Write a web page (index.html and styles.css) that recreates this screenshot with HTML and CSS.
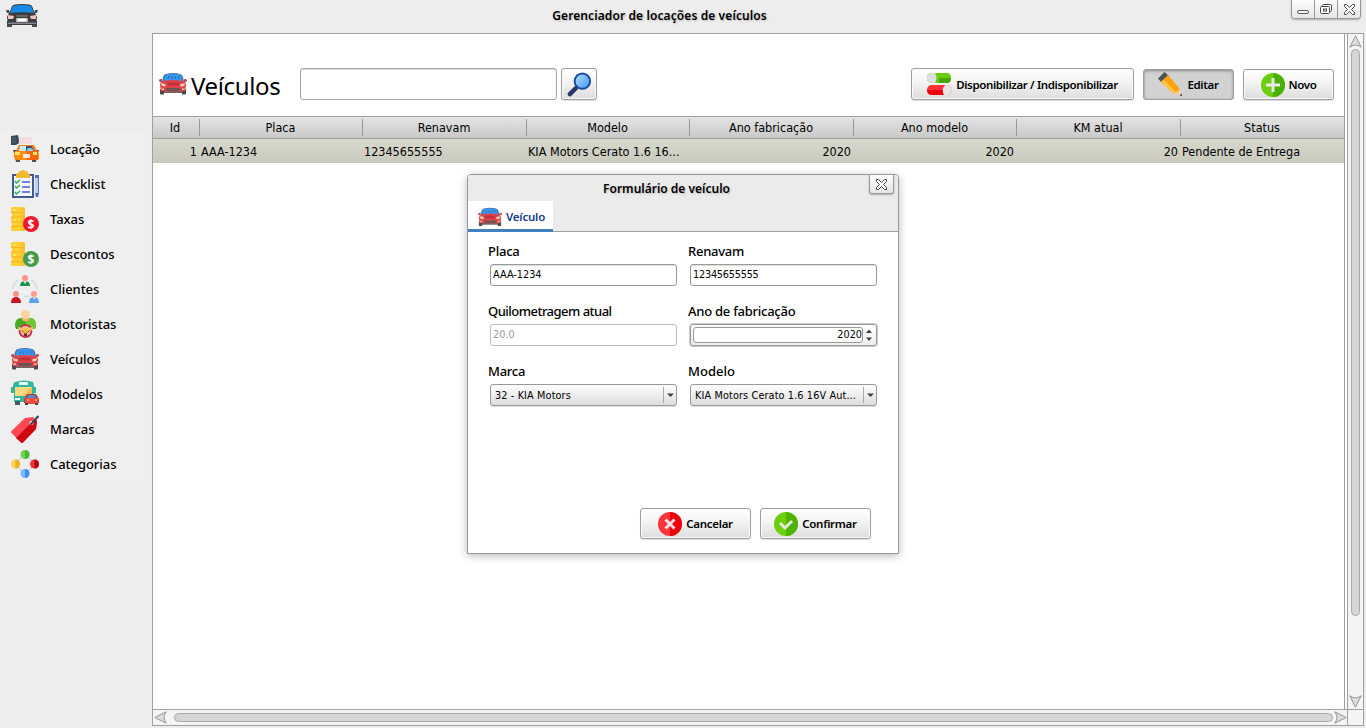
FILE: index.html
```html
<!DOCTYPE html>
<html lang="pt-BR">
<head>
<meta charset="utf-8">
<title>Gerenciador de locações de veículos</title>
<link rel="stylesheet" href="styles.css">
</head>
<body>
<svg class="defs" width="0" height="0">
  <defs>
    <linearGradient id="lens" x1="0" y1="0" x2="1" y2="1"><stop offset="0" stop-color="#b8e0ff"/><stop offset="1" stop-color="#3f95f5"/></linearGradient>
    <symbol id="car" viewBox="0 0 28 22">
      <path d="M4 16h20v4H4z" fill="#70655f"/>
      <path d="M1 16h4v5.500H2q-1 0-1-1zM23 16h4v4.500q0 1-1 1h-3z" fill="#4c4b50"/>
      <path d="M0 7q0-1 3-1v3H1q-1-1-1-2zM28 7q0-1-3-1v3h2q1-1 1-2z" fill="#c5434a"/>
      <path d="M7 1q7-1.800 14 0 2 0 3 3l1 5H3l1-5q1-3 3-3z" fill="#4a6f9e"/>
      <path d="M8 1.500q6-1.300 12 0 2 0 2.500 2.500l1 4h-19l1-4Q6 1.500 8 1.500z" fill="#3a96ec"/>
      <path d="M9 6l.7-3M12.500 6l.5-3M16 6l.7-3M19.500 6l.5-3" stroke="#256fc0" fill="none"/>
      <path d="M4 8q10-2 20 0 3 1 3 4l-1 6q-12 1-24 0l-1-6q0-3 3-4z" fill="#df4249"/>
      <path d="M8 10q6-1.500 12 0l-1 2.500H9z" fill="#b8323c"/>
      <path d="M2 10.500q4-.5 5 1.500l-1 1.500q-4 0-4-3zM26 10.500q-4-.5-5 1.500l1 1.500q4 0 4-3z" fill="#ffd9bd"/>
      <path d="M6 15h16l-2 3H8z" fill="#6e5554"/><path d="M2 16l3-1v2H2zM26 16l-3-1v2h3z" fill="#ffb38a"/>
    </symbol>
    <symbol id="dark-car" viewBox="0 0 32 24">
      <path d="M6 2q1-2 10-2t10 2l3 8H3z" fill="#34383e"/>
      <path d="M7 2q9-2 18 0l3 7H4z" fill="#168be5"/>
      <path d="M0 6h3l1 3H1zM32 6h-3l-1 3h3zM1 17h5v6H1zM26 17h5v6h-5z" fill="#4b4b50"/>
      <path d="M3 9q13-1.500 26 0l2 4-1 8H2l-1-8z" fill="#3c3b40"/>
      <path d="M2 11l6 1-1 3H2zM30 11l-6 1 1 3h5z" fill="#f1c4bb"/>
      <path d="M10 11h12l-1 2H11z" fill="#666"/><path d="M10 14h12v4H10z" fill="#aaa"/><path d="M11.500 14.500h9v3h-9z" fill="#fff"/>
      <path d="M2 18.500h28V20H2z" fill="#85858a"/>
    </symbol>
    <symbol id="rent" viewBox="0 0 28 28">
      <path d="M6 2h15v7H6z" fill="#f4dce2"/><path d="M0 1l7-1q1 4 1 8l-3 2H0z" fill="#394956"/><path d="M1 2h4v6H1z" fill="#465866"/>
      <path d="M2 15h4v3H3zM23 15h5l-1 3h-4zM4 22h5v5H5zM21 22h5l-1 5h-4z" fill="#43525e"/>
      <path d="M8 10h15l3 6H5z" fill="#f77d16"/><path d="M9 11h12l2 5H8z" fill="#c4eaff"/><path d="M15 11h6l2 5h-8z" fill="#3e5268"/>
      <path d="M16 16q-1-3 3-3 3 0 3 3" fill="#82d0ef"/>
      <path d="M4 16h22l2 3v5l-3 1H6l-3-2v-5z" fill="#ff8c0c"/><path d="M16 16h11v9H16z" fill="#f4660c"/>
      <path d="M4 17h5v3H4zM22 17h4v3h-4z" fill="#ffe06b"/><path d="M12 19h7v4h-7z" fill="#ffe6de"/>
    </symbol>
    <symbol id="check" viewBox="0 0 28 28">
      <path d="M1 4h22v24H1z" fill="#45598e"/><path d="M3 6h18v20H3z" fill="#f3f7ff"/>
      <path d="M7 3q0-2 3-2 2-2 4 0 3 0 3 2l2 2v3H5V5z" fill="#f5b92f"/>
      <path d="M4 11l1.500 2L9 10M4 16l1.500 2L9 15M4 22l1.500 2L9 21" fill="none" stroke="#24b451" stroke-width="1.500"/>
      <path d="M11 12h8M11 17h8M11 22h8" stroke="#5356db" stroke-width="1.500"/>
      <path d="M24 5h4v3h-4zM24 23h4l-1 4h-2z" fill="#456ebd"/><path d="M24 8h3v15h-3z" fill="#bbd0f3"/><path d="M27 6h1v17h-1z" fill="#5776b7"/>
    </symbol>
    <symbol id="coins" viewBox="0 0 28 28">
      <path d="M1 2h12q1 0 1 1v23H1q-1 0-1-1v-4h1v-5H0v-4h1V8H0V3q0-1 1-1z" fill="#ffd034"/>
      <path d="M0 7.500h14M0 12h14M0 17h14M0 21.500h14" stroke="#f8b321"/><path d="M2 4h3v2H2zM2 14h3v2H2z" fill="#ffe75d"/><path d="M10 3h4v23h-4z" fill="#f9b92d" opacity=".6"/>
    </symbol>
    <symbol id="clients" viewBox="0 0 28 28">
      <path d="M7 5Q2 9 2 14M20 5q5 3 6 9M13 21q3 1 5 0" fill="none" stroke="#cfdde6" stroke-width="1.500"/>
      <circle cx="14" cy="3" r="3" fill="#ff9185"/><path d="M9 11q0-5 5-5t5 5z" fill="#14964c"/><path d="M12 6h4l-2 3z" fill="#ffd0c4"/>
      <circle cx="5" cy="19" r="3" fill="#ff9185"/><path d="M0 28q0-6 5-6t5 6z" fill="#c81120"/>
      <circle cx="23" cy="19" r="3" fill="#ff9c8d"/><path d="M18 28q0-6 5-6t5 6z" fill="#5b9eee"/><path d="M22 22h3l-2 3z" fill="#ffd0c4"/>
    </symbol>
    <symbol id="driver" viewBox="0 0 28 28">
      <path d="M5 19l-1-3q0-8 6-8h9q6 0 6 8l-1 3z" fill="#42ad22"/><path d="M15 8h4q6 0 6 8l-1 3h-9z" fill="#72c832"/>
      <path d="M11 7h7v3q-3 3-7 0z" fill="#f5b173"/><circle cx="14.500" cy="4.500" r="4.500" fill="#ffd29c"/>
      <circle cx="14.500" cy="21" r="6" fill="#f9c0a3" stroke="#c83050" stroke-width="1.800"/><path d="M9.500 20h10l-3.500 3v3h-3v-3z" fill="#633322"/><path d="M7 17l5 1v3l-4-1zM22 17l-5 1v3l4-1z" fill="#ffc16c"/><path d="M14.500 17l3 4-3 3-3-3z" fill="#f6ba36"/>
    </symbol>
    <symbol id="bus" viewBox="0 0 28 28">
      <path d="M4 2Q13-1 22 2q1 2 1 5h2v6h-2v9H3v-9H0V7h2q0-4 2-5z" fill="#2fb7a2"/><path d="M4 21h5v4H4z" fill="#435e67"/>
      <path d="M8 2h9v3H8z" fill="#e4fcf8"/><path d="M4 7h17v9H4z" fill="#ffd77e"/><path d="M12 16l9-9v9z" fill="#ffbb4e"/><path d="M4 18h5v2H4z" fill="#fff"/>
      <path d="M16 14h9l3 5v4H13v-4z" fill="#b63a40"/><path d="M17 15h7l1 4h-9z" fill="#4c91c5"/><path d="M14 18h13v6H14z" fill="#ed4d42"/><path d="M14 23h3v2h-3zM24 23h3v2h-3z" fill="#444"/><path d="M16 20h2M24 20h2" stroke="#ffe5a8"/>
    </symbol>
    <symbol id="tag" viewBox="0 0 28 28">
      <path d="M14 3l8-1 4 4-1 8L12 27.500q-1 1-2 0L.500 18q-1-1 0-2z" fill="#ff4854"/><path d="M24 4l2 2-1 8L12 27.500q-1 1-2 0L5 23z" fill="#cf0712"/><circle cx="20.500" cy="8" r="2" fill="#fff"/><path d="M19.500 9.500L27.500 1" stroke="#30475d" fill="none" stroke-width="2"/>
    </symbol>
    <symbol id="category" viewBox="0 0 28 28">
      <path d="M14 4l10 10-10 10L4 14z" fill="none" stroke="#cfdbe6" stroke-width="1.500"/>
      <circle cx="14" cy="4.500" r="4.500" fill="#70d34f"/><path d="M14 0a4.500 4.500 0 010 9z" fill="#45b934"/>
      <circle cx="4.500" cy="14" r="4.500" fill="#ffd052"/><path d="M4.500 9.500a4.500 4.500 0 010 9z" fill="#efb020"/>
      <circle cx="23.500" cy="14" r="4.500" fill="#ed353b"/><path d="M23.500 9.500a4.500 4.500 0 010 9z" fill="#b40012"/>
      <circle cx="14" cy="23.500" r="4.500" fill="#72bbfc"/><path d="M14 19a4.500 4.500 0 010 9z" fill="#478cf4"/>
    </symbol>
    <symbol id="pill" viewBox="0 0 25 22">
      <path d="M5 0h15q4 0 4 5t-4 5H5q-5 0-5-5t5-5z" fill="#6acb0b"/><path d="M12 5h12q0 5-4 5h-8z" fill="#45a800"/><path d="M4 0h4q3 5 0 10H5Q0 10 0 5q0-4 4-5z" fill="#dcdfe2"/>
      <path d="M4 12h16q5 0 5 5t-5 5H4q-4-1-4-5t4-5z" fill="#ff3038"/><path d="M0 17h18v5H4q-4-1-4-5z" fill="#f0000a"/><path d="M18 12h2q5 0 5 5t-5 5h-3q-3-5 1-10z" fill="#e2e4e8"/>
    </symbol>
    <symbol id="pencil" viewBox="0 0 25 25">
      <path d="M0 6.500L6.500 0 11 4l-7 7z" fill="#505259"/><path d="M3 10l7-7 12 14-6 5z" fill="#ffa30d"/><path d="M3 10l2.500-2.500L18 20l-2 2z" fill="#ffc445"/><path d="M16 22l6-5 2 7z" fill="#f1cca5"/><path d="M21.500 23.500L24 21.500v2.500z" fill="#444"/>
    </symbol>
    <symbol id="plus" viewBox="0 0 24 24"><circle cx="12" cy="12" r="12" fill="#6bcf0b"/><path d="M12 0a12 12 0 010 24z" fill="#4bb000"/><path d="M12 5v14M5 12h14" stroke="#e9e9ee" stroke-width="3"/></symbol>
    <symbol id="cross" viewBox="0 0 24 24"><circle cx="12" cy="12" r="12" fill="#ff343b"/><path d="M12 0a12 12 0 010 24z" fill="#ed000b"/><path d="M7.500 7.500l9 9m0-9l-9 9" stroke="#f2dde0" stroke-width="3"/></symbol>
    <symbol id="ok" viewBox="0 0 24 24"><circle cx="12" cy="12" r="12" fill="#6bcf0b"/><path d="M12 0a12 12 0 010 24z" fill="#4eb400"/><path d="M6 11l5 5 7-7" fill="none" stroke="#e4ece0" stroke-width="3"/></symbol>
    <symbol id="close" viewBox="0 0 11 11"><path d="M.5 .5v2L3.500 5.500.5 8.500v2h2l3-3 3 3h2v-2l-3-3 3-3v-2h-2l-3 3-3-3z" fill="#fff" stroke="#454b54"/></symbol>
    <symbol id="arrow" viewBox="0 0 13 13"><path d="M6.500.8l5.700 11.400Q9 10 6.500 10T.8 12.200z" fill="#ddd" stroke="#969696"/></symbol>
  </defs>
</svg>
<div class="window">
  <header class="titlebar">
    <svg class="app-icon"><use href="#dark-car"/></svg>
    <h1 class="window-title">Gerenciador de locações de veículos</h1>
    <div class="window-buttons">
      <span class="wbtn"><svg width="13" height="12"><rect x=".5" y="7.500" width="11" height="3" rx="1.500" fill="#fff" stroke="#555b62"/></svg></span>
      <span class="wbtn"><svg width="12" height="11"><rect x="2.500" y=".5" width="9" height="7" rx="1" fill="#fff" stroke="#454b54"/><rect x=".5" y="2.500" width="9" height="7" rx="1" fill="#fff" stroke="#454b54"/><rect x="3.500" y="5" width="3" height="2" fill="#fff" stroke="#454b54"/></svg></span>
      <span class="wbtn"><svg width="11" height="11"><use href="#close"/></svg></span>
    </div>
  </header>
  <div class="main">
    <nav class="sidebar">
      <a class="nav-item"><svg><use href="#rent"/></svg>Locação</a>
      <a class="nav-item"><svg><use href="#check"/></svg>Checklist</a>
      <a class="nav-item"><svg viewBox="0 0 28 28"><use href="#coins"/><circle cx="20" cy="19" r="8" fill="#ee1727"/><text class="coin" x="20" y="23.500">$</text></svg>Taxas</a>
      <a class="nav-item"><svg viewBox="0 0 28 28"><use href="#coins"/><circle cx="20" cy="19" r="8" fill="#469b4b"/><text class="coin" x="20" y="23.500">$</text></svg>Descontos</a>
      <a class="nav-item"><svg><use href="#clients"/></svg>Clientes</a>
      <a class="nav-item"><svg><use href="#driver"/></svg>Motoristas</a>
      <a class="nav-item"><svg><use href="#car"/></svg>Veículos</a>
      <a class="nav-item"><svg><use href="#bus"/></svg>Modelos</a>
      <a class="nav-item"><svg><use href="#tag"/></svg>Marcas</a>
      <a class="nav-item"><svg><use href="#category"/></svg>Categorias</a>
    </nav>
    <section class="pane">
      <div class="view">
        <div class="toolbar">
          <svg class="page-icon"><use href="#car"/></svg>
          <h2 class="page-title">Veículos</h2>
          <div class="search"></div>
          <button class="btn search-btn"><svg width="25" height="25" viewBox="0 0 26 26"><path d="M3 23l6-6" stroke="#263566" stroke-width="4.500" stroke-linecap="round"/><circle cx="16" cy="9.500" r="8" fill="url(#lens)" stroke="#1c49a0" stroke-width="2"/></svg></button>
          <div class="actions">
            <button class="btn toggle"><svg width="25" height="22"><use href="#pill"/></svg>Disponibilizar / Indisponibilizar</button>
            <button class="btn edit"><svg width="25" height="25"><use href="#pencil"/></svg>Editar</button>
            <button class="btn new"><svg width="24" height="24"><use href="#plus"/></svg>Novo</button>
          </div>
        </div>
        <div class="grid head"><span>Id</span><span>Placa</span><span>Renavam</span><span>Modelo</span><span>Ano fabricação</span><span>Ano modelo</span><span>KM atual</span><span>Status</span></div>
        <div class="grid row"><span class="num">1</span><span>AAA-1234</span><span>12345655555</span><span>KIA Motors Cerato 1.6 16...</span><span class="num">2020</span><span class="num">2020</span><span class="num">20</span><span>Pendente de Entrega</span></div>
      </div>
      <div class="vscroll"><svg><use href="#arrow"/></svg><i class="thumb"></i><svg class="down"><use href="#arrow"/></svg></div>
      <div class="hscroll"><svg class="left"><use href="#arrow"/></svg><i class="thumb"></i><svg class="right"><use href="#arrow"/></svg></div>
      <div class="corner"></div>
    </section>
  </div>
  <div class="dialog">
    <div class="dialog-head"><h3 class="dialog-title">Formulário de veículo</h3><span class="wbtn dialog-close"><svg width="11" height="11"><use href="#close"/></svg></span></div>
    <div class="tabs"><div class="tab"><svg><use href="#car"/></svg>Veículo</div></div>
    <div class="form">
      <div class="field"><label>Placa</label><div class="input">AAA-1234</div></div>
      <div class="field"><label>Renavam</label><div class="input tight">12345655555</div></div>
      <div class="field"><label class="narrow">Quilometragem atual</label><div class="input disabled">20.0</div></div>
      <div class="field"><label>Ano de fabricação</label><div class="spinner"><span class="spin-value">2020</span><svg width="12" height="20"><path d="M3 8l3-3.500L9 8zM3 12.500h6L6 16z" fill="#3e4246"/></svg></div></div>
      <div class="field"><label>Marca</label><div class="select"><span>32 - KIA Motors</span><svg width="13" height="16"><path d="M3 6.500h7l-3.500 3.500z" fill="#3e4246"/></svg></div></div>
      <div class="field"><label class="wide">Modelo</label><div class="select"><span>KIA Motors Cerato 1.6 16V Aut...</span><svg width="13" height="16"><path d="M3 6.500h7l-3.500 3.500z" fill="#3e4246"/></svg></div></div>
    </div>
    <div class="dialog-actions">
      <button class="btn"><svg width="24" height="24"><use href="#cross"/></svg>Cancelar</button>
      <button class="btn"><svg width="24" height="24"><use href="#ok"/></svg>Confirmar</button>
    </div>
  </div>
</div>
</body>
</html>
```
FILE: styles.css
```css
* { box-sizing: border-box; }
body { margin: 0; font: 500 13px "Noto Sans", "Open Sans", sans-serif; color: #000; }
h1, h2, h3 { margin: 0; font: inherit; }
svg { display: block; flex: none; }
.defs { position: absolute; }
.window { position: relative; width: 1366px; height: 728px; background: #ededed; overflow: hidden; display: flex; flex-direction: column; }
.titlebar { height: 33px; flex: none; display: grid; grid-template-columns: 76px 1fr 76px; }
.app-icon { width: 32px; height: 24px; margin: 4px 0 0 6px; }
.window-title { justify-self: center; margin-left: -47px; font-size: 12px; font-weight: 600; line-height: 18px; padding-top: 7px; letter-spacing: .1px; text-shadow: 1px 1px 2px #bbb; }
.window-buttons { display: flex; width: 70px; height: 19px; margin-left: 1px; border: 1px solid #999; border-top: 0; border-radius: 0 0 4px 4px; box-shadow: 0 1px 2px #aaa; overflow: hidden; }
.wbtn { flex: 1; display: flex; align-items: center; justify-content: center; background: linear-gradient(#fdfdfd, #e6e6e6); }
.wbtn + .wbtn { border-left: 1px solid #999; }
.main { display: grid; grid-template-columns: 152px 1212px; height: 693px; }
.sidebar { padding-top: 98px; }
.nav-item { display: flex; align-items: center; gap: 11px; width: 151px; height: 35px; padding-left: 11px; background: #efefef; letter-spacing: -.05px; }
.nav-item svg { width: 28px; height: 28px; }
.coin { font: bold 12px "Noto Sans", sans-serif; fill: #fff; text-anchor: middle; }
.pane { display: grid; grid-template-columns: 1194px 16px; grid-template-rows: 675px 16px; border: 1px solid #a0a0a0; background: #fff; height: 693px; }
.view { border-right: 1px solid #a0a0a0; width: 1192px; }
.toolbar { height: 82px; display: flex; align-items: flex-start; padding: 34px 10px 0 6px; }
.page-icon { width: 28px; height: 22px; margin-top: 5px; }
.page-title { width: 113px; margin-left: 4px; font-size: 24px; font-weight: 400; line-height: 35px; letter-spacing: -.35px; white-space: nowrap; }
.search { width: 257px; height: 32px; margin-left: -4px; border: 1px solid #a4a4a4; border-radius: 3px; box-shadow: inset 0 1px 1px #ddd; }
.btn { display: flex; align-items: center; justify-content: center; gap: 4px; height: 32px; padding: 0; border: 1px solid #9e9e9e; border-radius: 3px; background: linear-gradient(#fff, #f3f3f3 45%, #ddd); box-shadow: inset 0 0 0 1px #fafafa, 0 1px 1px #ddd; font: 600 11.500px "Noto Sans", sans-serif; letter-spacing: -.37px; color: #000; white-space: nowrap; }
.search-btn { width: 36px; margin-left: 4px; }
.actions { display: flex; gap: 9px; margin-left: auto; }
.toggle { width: 223px; }
.edit { width: 91px; margin-top: 1px; height: 31px; background: #d2d2d2; box-shadow: inset 0 1px 3px #888; }
.new { width: 91px; margin-top: 1px; height: 31px; }
.grid { display: grid; grid-template-columns: 46px 163px 164px 163px 164px 163px 164px 164px; font: 12.500px "DejaVu Sans Condensed", "DejaVu Sans", sans-serif; font-stretch: condensed; white-space: nowrap; }
.head { height: 23px; border: solid #a0a0a0; border-width: 1px 0; background: linear-gradient(#e4e4e4, #c9c9c9); text-align: center; line-height: 21px; }
.head span + span { background: linear-gradient(#999, #999) 0 2px / 1px 17px no-repeat; }
.head span:first-child { padding-right: 2px; }
.row { height: 24px; background: linear-gradient(#d8d9cd, #c9cabd); line-height: 26px; }
.row span { padding: 0 2px; }
.num { text-align: right; }
.vscroll { display: flex; flex-direction: column; align-items: center; border-left: 1px solid #a0a0a0; background: #f4f4f4; padding: 1px 0 0; }
.vscroll svg, .hscroll svg { width: 13px; height: 13px; }
.thumb { display: block; background: #d6d6d6; border: 1px solid #aaa; border-radius: 5px; }
.vscroll .thumb { width: 9px; height: 567px; margin-top: 1px; }
.down { margin: auto 0 1px; transform: rotate(180deg); }
.hscroll { display: flex; align-items: center; border-top: 1px solid #a0a0a0; background: #f4f4f4; }
.hscroll .thumb { height: 9px; width: 1159px; margin-left: 7px; }
.left { transform: rotate(-90deg); margin-left: 1px; }
.right { transform: rotate(90deg); margin-left: auto; }
.corner { border: solid #a0a0a0; border-width: 1px 0 0 1px; background: #f4f4f4; }
.dialog { position: absolute; left: 467px; top: 174px; width: 432px; height: 380px; border: 1px solid #999; border-radius: 4px 4px 0 0; background: #fff; box-shadow: 0 2px 9px rgba(0,0,0,.28); }
.dialog-head { height: 26px; background: #ebebeb; border-radius: 3px 3px 0 0; display: grid; grid-template-columns: 1fr 25px; padding-right: 4px; }
.dialog-title { justify-self: center; padding: 5px 4px 0 0; font-size: 12px; font-weight: 600; line-height: 18px; text-shadow: 1px 1px 2px #bbb; }
.dialog-close { height: 19px; border: 1px solid #999; border-top: 0; border-radius: 0 0 3px 3px; box-shadow: 0 1px 2px #aaa; }
.tabs { height: 31px; background: #ebebeb; border-bottom: 1px solid #a0a0a0; }
.tab { display: flex; align-items: center; gap: 4px; width: 85px; height: 31px; padding: 3px 0 0 10px; background: #fff; border-bottom: 3px solid #4280bf; color: #153a8a; font-size: 11.500px; font-weight: 600; letter-spacing: -.2px; white-space: nowrap; }
.tab svg { width: 24px; height: 20px; }
.form { display: grid; grid-template-columns: 188px 188px; grid-auto-rows: 60px; column-gap: 12px; padding: 10px 0 0 20px; height: 275px; align-content: start; }
.field label { display: block; height: 20px; line-height: 19px; white-space: nowrap; letter-spacing: -.25px; }
.field .narrow { letter-spacing: -.52px; }
.field .wide { letter-spacing: 0; }
.input, .select, .spinner { display: flex; align-items: center; height: 22px; width: 187px; margin: 2px 0 0 2px; border: 1px solid #999; border-radius: 3px; padding-left: 2px; font: 10.800px "DejaVu Sans Condensed", "DejaVu Sans", sans-serif; font-stretch: condensed; white-space: nowrap; }
.input { box-shadow: inset 0 1px 1px #ddd; padding-bottom: 1px; }
.tight { letter-spacing: -.22px; }
.disabled { color: #999; border-color: #bbb; box-shadow: none; }
.select { background: linear-gradient(#fff, #ddd); padding-left: 4px; justify-content: space-between; box-shadow: 0 1px 1px #ddd; letter-spacing: .12px; }
.select svg { border-left: 1px solid #aaa; }
.spinner { padding: 0 0 0 2px; background: linear-gradient(#fff, #eee); box-shadow: 0 0 0 1px #ccc; }
.spin-value { width: 170px; height: 16px; line-height: 14px; border: 1px solid #999; border-radius: 3px; background: #fff; text-align: right; }
.dialog-actions { display: flex; justify-content: flex-end; gap: 9px; padding: 1px 27px 0 0; }
.dialog-actions .btn { width: 111px; height: 31px; letter-spacing: -.28px; }
```
